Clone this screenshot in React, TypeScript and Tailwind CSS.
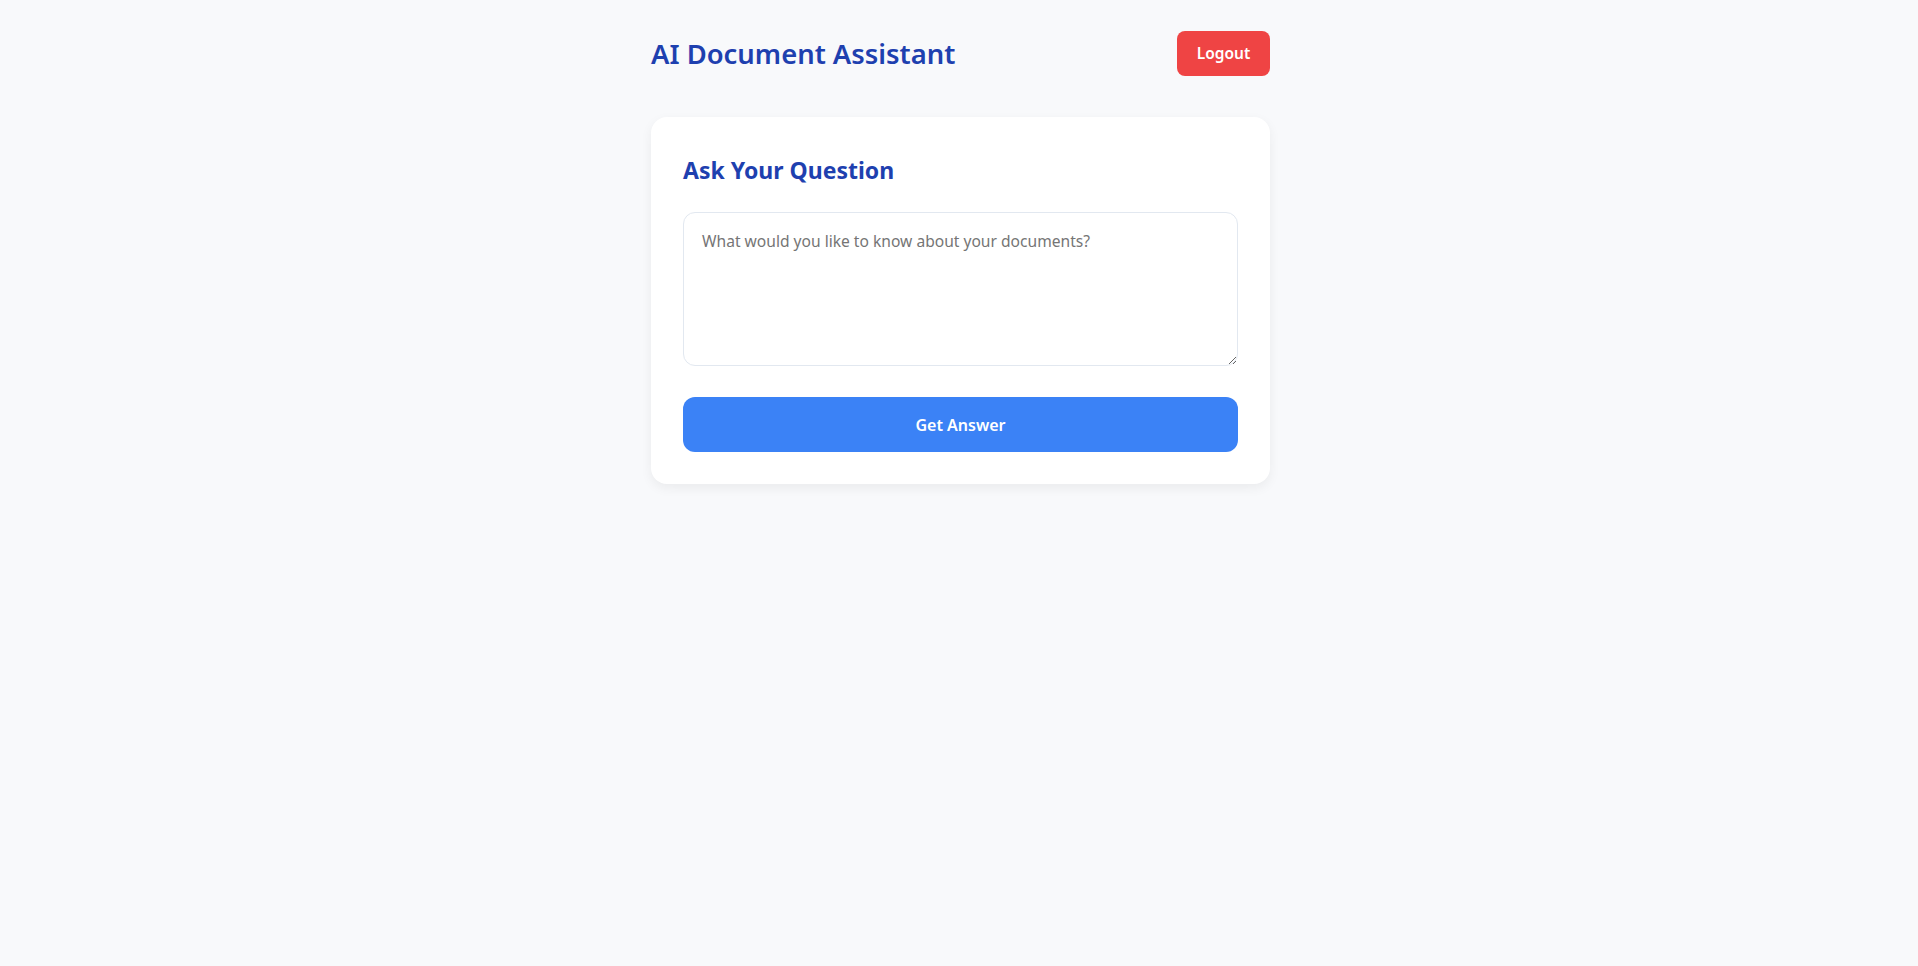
export default function App() {
  return (
    <div className="min-h-screen bg-[#f8f9fb] font-['Noto_Sans',sans-serif]">
      <div className="mx-auto w-[622px] pl-[3px] pt-[31px]">
        <header className="flex items-center justify-between">
          <h1 className="text-[27.4px] font-semibold leading-[45px] text-[#1e40af]">AI Document Assistant</h1>
          <button className="h-[45px] w-[93px] rounded-lg bg-[#ef4444] text-[15.5px] font-semibold text-white">Logout</button>
        </header>
        <div className="mt-[41px] rounded-2xl bg-white p-8 shadow-[0_4px_12px_rgba(0,0,0,0.06)]">
          <h2 className="pt-[5px] text-[23px] font-bold leading-8 text-[#1e40af]">Ask Your Question</h2>
          <textarea
            className="mt-[26px] block h-[154px] w-full resize-y rounded-xl border border-[#e2e8f0] pl-[18px] pr-4 pt-[16px] pb-[12px] text-[15.6px] leading-6 placeholder:text-[#757575] outline-none"
            placeholder="What would you like to know about your documents?"
          />
          <button className="mt-[31px] block h-[55px] w-full rounded-xl bg-[#3b82f6] text-[16px] font-semibold text-white">Get Answer</button>
        </div>
      </div>
    </div>
  );
}
